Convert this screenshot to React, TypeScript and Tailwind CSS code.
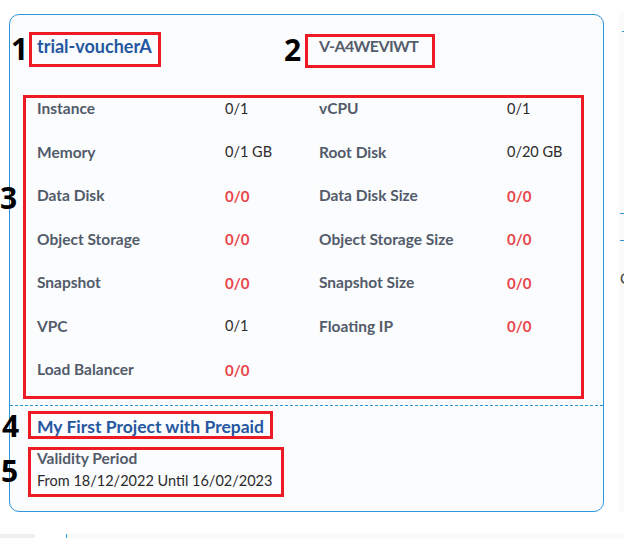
import React from "react";

const rows: [string, string, boolean, string, string, boolean][] = [
  ["Instance", "0/1", false, "vCPU", "0/1", false],
  ["Memory", "0/1 GB", false, "Root Disk", "0/20 GB", false],
  ["Data Disk", "0/0", true, "Data Disk Size", "0/0", true],
  ["Object Storage", "0/0", true, "Object Storage Size", "0/0", true],
  ["Snapshot", "0/0", true, "Snapshot Size", "0/0", true],
  ["VPC", "0/1", false, "Floating IP", "0/0", true],
  ["Load Balancer", "0/0", true, "", "", false],
];

function Val({ v, red }: { v: string; red: boolean }) {
  return (
    <span className={red ? "font-bold text-[#e8464b] text-[15px]" : "text-[#2b2b2b] text-[14.5px]"}>{v}</span>
  );
}

export default function App() {
  return (
    <div className="relative w-[624px] h-[538px] overflow-hidden bg-white" style={{ fontFamily: "Lato, 'Noto Sans', sans-serif" }}>
      <div className="flex items-start pt-[14px] pl-[9px]">
        {/* voucher card */}
        <div className="w-[595px] h-[498px] shrink-0 rounded-[10px] border border-[#2d96d8] bg-[#fbfcfe] flex flex-col">
          <div className="flex items-center h-[58px] pl-[27px] pt-[4px]">
            <div className="w-[282px] text-[18px] font-bold text-[#2557a0]">trial-voucherA</div>
            <div className="text-[16px] font-bold tracking-[-0.6px] text-[#555d6b]">V-A4WEVIWT</div>
          </div>
          <div className="grid grid-cols-[188px_94px_188px_1fr] pl-[27px] mt-[14px]">
            {rows.map((r, i) => (
              <React.Fragment key={i}>
                <div className="h-[43.5px] flex items-center text-[15.5px] font-bold text-[#525b6a]">{r[0]}</div>
                <div className="h-[43.5px] flex items-center"><Val v={r[1]} red={r[2]} /></div>
                <div className="h-[43.5px] flex items-center text-[15.5px] font-bold text-[#525b6a]">{r[3]}</div>
                <div className="h-[43.5px] flex items-center">{r[4] && <Val v={r[4]} red={r[5]} />}</div>
              </React.Fragment>
            ))}
          </div>
          <div className="mt-[13px] border-t border-dashed border-[#2d96d8]" />
          <div className="pl-[27px] pt-[9px]">
            <div className="text-[17.5px] font-bold text-[#2557a0] leading-[24px]">My First Project with Prepaid</div>
            <div className="mt-[9px] text-[15.5px] font-bold text-[#525b6a] leading-[20px]">Validity Period</div>
            <div className="mt-[3px] text-[14.5px] text-[#2b2b2b] leading-[20px]">From 18/12/2022 Until 16/02/2023</div>
          </div>
        </div>
        {/* neighbouring panel, cut off */}
        <div className="ml-[15px] mt-[-2px] w-[40px] h-[500px] shrink-0 bg-[#fafafa] flex flex-col">
          <div className="mt-[19px] ml-[3px] h-px bg-[#2d96d8]" />
          <div className="mt-[181px] ml-[1px] h-px bg-[#2d96d8]" />
          <div className="mt-[26px] ml-[1px] h-px bg-[#2d96d8]" />
          <div className="mt-[30px] ml-[1px] text-[15px] text-[#444] leading-none">C</div>
        </div>
      </div>
      <div className="flex items-start mt-[22px]">
        <div className="w-[35px] h-[4px] bg-[#efefef]" />
        <div className="ml-[31px] w-px h-[4px] bg-[#2d96d8]" />
        <div className="flex-1 h-[4px] bg-[#fafafa]" />
      </div>

      {/* annotation overlay */}
      <div className="absolute left-[29px] top-[32px] w-[132px] h-[35px] border-[3px] border-[#ed1c24]" />
      <div className="absolute left-[305px] top-[34px] w-[130px] h-[34px] border-[3px] border-[#ed1c24]" />
      <div className="absolute left-[23px] top-[95px] w-[561px] h-[304px] border-[3px] border-[#ed1c24]" />
      <div className="absolute left-[28px] top-[411px] w-[245px] h-[28px] border-[3px] border-[#ed1c24]" />
      <div className="absolute left-[28px] top-[447px] w-[256px] h-[50px] border-[3px] border-[#ed1c24]" />
      {[
        ["1", "left-[11px] top-[31px]"],
        ["2", "left-[284px] top-[32px]"],
        ["3", "left-[0px] top-[180px]"],
        ["4", "left-[2px] top-[408px]"],
        ["5", "left-[1px] top-[453px]"],
      ].map(([n, pos]) => (
        <div key={n} className={`absolute ${pos} text-[30px] font-bold text-black leading-[36px]`} style={{ fontFamily: "'Open Sans', sans-serif" }}>
          {n}
        </div>
      ))}
    </div>
  );
}
